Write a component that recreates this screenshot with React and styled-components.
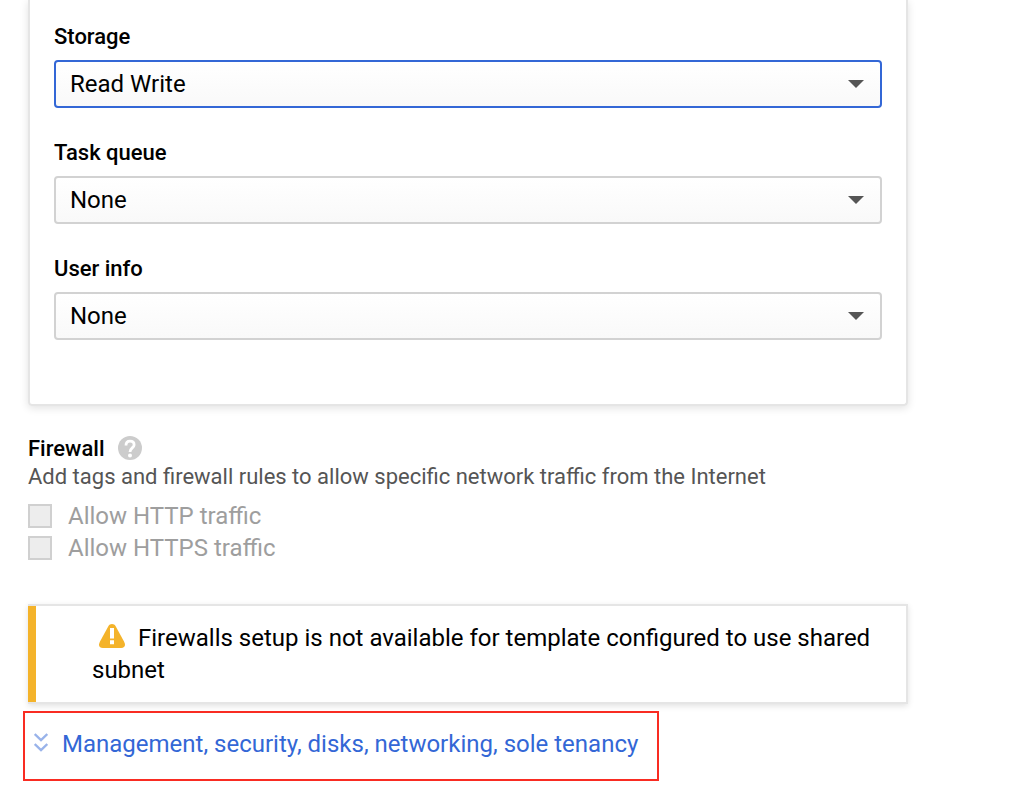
import React from "react";
import styled, { createGlobalStyle } from "styled-components";

const GlobalStyle = createGlobalStyle`
  *, *::before, *::after { box-sizing: border-box; }
  body {
    margin: 0;
    background: #fff;
    color: #000;
    font-family: Roboto, "Liberation Sans", sans-serif;
    font-size: 24px;
    line-height: 32px;
  }
`;

const Page = styled.main`
  padding: 0 106px 15px 28px;
`;

const Panel = styled.section`
  padding: 20px 24px 64px;
  border: 2px solid #e5e5e5;
  border-top: 0;
  border-radius: 0 0 4px 4px;
  box-shadow: 0 2px 8px rgba(0, 0, 0, 0.12);
  display: flex;
  flex-direction: column;
  gap: 28px;
`;

const Field = styled.div`
  display: flex;
  flex-direction: column;
  gap: 6px;
`;

const Label = styled.label`
  font-size: 22px;
  font-weight: 500;
  line-height: 34px;
`;

const SelectFrame = styled.div`
  display: grid;
  align-items: center;

  > * { grid-area: 1 / 1; }
`;

const Select = styled.select`
  appearance: none;
  width: 100%;
  height: 48px;
  padding: 0 48px 0 14px;
  border: 2px solid ${({ $active }) => ($active ? "#3367d6" : "#d2d2d2")};
  border-radius: 4px;
  outline: none;
  background: linear-gradient(#fff, #f9f9f9);
  color: #000;
  font: inherit;
`;

const Arrow = styled.svg`
  justify-self: end;
  margin-right: 18px;
  pointer-events: none;
`;

const Firewall = styled.section`
  margin-top: 26px;
`;

const Heading = styled.h2`
  margin: 0;
  height: 30px;
  display: flex;
  align-items: flex-start;
  gap: 14px;
  font-size: 22px;
  font-weight: 500;
  line-height: 34px;
`;

const HelpButton = styled.button`
  width: 24px;
  height: 24px;
  margin: 4px 0 0;
  padding: 0;
  border: 0;
  background: none;

  svg { display: block; }
`;

const Description = styled.p`
  margin: 0 0 8px;
  color: #555;
  font-size: 22px;
  line-height: 30px;
`;

const CheckRow = styled.label`
  display: flex;
  align-items: center;
  gap: 16px;
  color: #9e9e9e;
`;

const Checkbox = styled.input`
  appearance: none;
  width: 24px;
  height: 24px;
  margin: 0;
  border: 2px solid #d0d0d0;
  background: #ededed;
`;

const Notice = styled.div`
  display: flex;
  margin-top: 40px;
  border: 2px solid #e5e5e5;
  border-left: 0;
  box-shadow: 0 2px 6px rgba(0, 0, 0, 0.12);
`;

const NoticeBar = styled.div`
  flex: 0 0 8px;
  background: #f4b32a;
`;

const NoticeText = styled.p`
  margin: 0;
  padding: 16px 32px 16px 56px;
`;

const WarningIcon = styled.svg`
  margin: 0 12px 0 7px;
  vertical-align: -3px;
`;

const Highlight = styled.div`
  width: fit-content;
  margin: 7px 0 0 -5px;
  padding: 15px 19px 19px 9px;
  border: 2px solid #f92c22;
`;

const ExpandLink = styled.a`
  display: flex;
  align-items: center;
  gap: 14px;
  color: #3367d6;
  text-decoration: none;
`;

const fields = [
  { id: "storage", label: "Storage", value: "Read Write", active: true },
  { id: "task-queue", label: "Task queue", value: "None" },
  { id: "user-info", label: "User info", value: "None" },
];

function SelectField({ id, label, value, active }) {
  return (
    <Field>
      <Label htmlFor={id}>{label}</Label>
      <SelectFrame>
        <Select id={id} defaultValue={value} $active={active}>
          <option>{value}</option>
        </Select>
        <Arrow width="16" height="8" viewBox="0 0 16 8" aria-hidden="true">
          <path d="M0 0H16L8 8Z" fill="#555" />
        </Arrow>
      </SelectFrame>
    </Field>
  );
}

export default function App() {
  return (
    <>
      <GlobalStyle />
      <Page>
        <Panel>
          {fields.map((field) => (
            <SelectField key={field.id} {...field} />
          ))}
        </Panel>

        <Firewall>
          <Heading>
            Firewall
            <HelpButton type="button" aria-label="Help">
              <svg width="24" height="24" viewBox="0 0 24 24" aria-hidden="true">
                <circle cx="12" cy="12" r="12" fill="#ccc" />
                <path
                  d="M8 9.4C8 6.6 9.7 5.2 12 5.2s4.1 1.4 4.1 3.7c0 2.9-4.1 3.2-4.1 7"
                  fill="none"
                  stroke="#fff"
                  strokeWidth="2.8"
                />
                <circle cx="12" cy="19.4" r="2" fill="#fff" />
              </svg>
            </HelpButton>
          </Heading>
          <Description>
            Add tags and firewall rules to allow specific network traffic from the Internet
          </Description>
          <CheckRow>
            <Checkbox type="checkbox" disabled />
            Allow HTTP traffic
          </CheckRow>
          <CheckRow>
            <Checkbox type="checkbox" disabled />
            Allow HTTPS traffic
          </CheckRow>
        </Firewall>

        <Notice role="status">
          <NoticeBar />
          <NoticeText>
            <WarningIcon width="27" height="25" viewBox="0 0 27 25" aria-hidden="true">
              <path
                d="M9.2 2.4C11-.7 15-.7 16.8 2.4L25 17.4C27.2 21.6 25.6 24 22.2 24H3.8C.4 24-1.2 21.6 1 17.4Z"
                fill="#f4b32a"
              />
              <path d="M11 4h4v10.5h-4zM11 16.2h4v4h-4z" fill="#fff" />
            </WarningIcon>
            Firewalls setup is not available for template configured to use shared subnet
          </NoticeText>
        </Notice>

        <Highlight>
          <ExpandLink href="#advanced">
            <svg width="14" height="22" viewBox="0 0 14 22" aria-hidden="true">
              <path
                d="M.7 1L7 7 13.3 1M.7 11L7 17 13.3 11"
                fill="none"
                stroke="#99b3ea"
                strokeWidth="2.4"
              />
            </svg>
            Management, security, disks, networking, sole tenancy
          </ExpandLink>
        </Highlight>
      </Page>
    </>
  );
}
